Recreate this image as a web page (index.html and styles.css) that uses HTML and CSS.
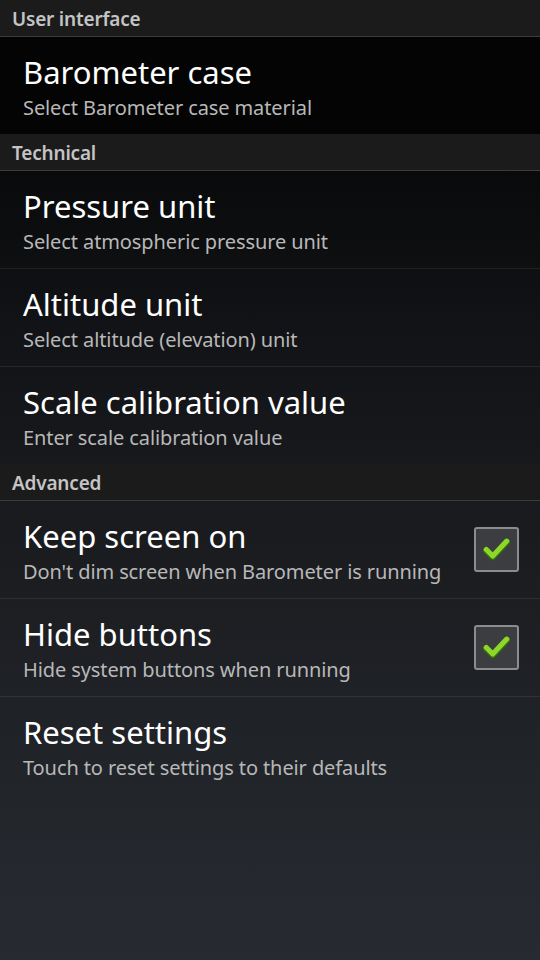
FILE: index.html
```html
<!DOCTYPE html>
<html>
<head>
<meta charset="utf-8">
<link rel="stylesheet" href="styles.css">
</head>
<body>
<div class="screen">
  <div class="section">User interface</div>
  <div class="row first last">
    <div class="texts">
      <div class="title">Barometer case</div>
      <div class="summary">Select Barometer case material</div>
    </div>
  </div>
  <div class="section">Technical</div>
  <div class="row">
    <div class="texts">
      <div class="title">Pressure unit</div>
      <div class="summary">Select atmospheric pressure unit</div>
    </div>
  </div>
  <div class="row">
    <div class="texts">
      <div class="title">Altitude unit</div>
      <div class="summary">Select altitude (elevation) unit</div>
    </div>
  </div>
  <div class="row last">
    <div class="texts">
      <div class="title">Scale calibration value</div>
      <div class="summary">Enter scale calibration value</div>
    </div>
  </div>
  <div class="section">Advanced</div>
  <div class="row">
    <div class="texts">
      <div class="title">Keep screen on</div>
      <div class="summary">Don't dim screen when Barometer is running</div>
    </div>
    <div class="check">
      <svg viewBox="0 0 44 44" width="44" height="44"><path d="M11 23 L18 30 L33 14" fill="none" stroke="#2f6f0c" stroke-width="7" stroke-linecap="round" stroke-linejoin="round"/><path d="M11 22 L18 29 L33 13" fill="none" stroke="#8fd62a" stroke-width="5.5" stroke-linecap="round" stroke-linejoin="round"/></svg>
    </div>
  </div>
  <div class="row">
    <div class="texts">
      <div class="title">Hide buttons</div>
      <div class="summary">Hide system buttons when running</div>
    </div>
    <div class="check">
      <svg viewBox="0 0 44 44" width="44" height="44"><path d="M11 23 L18 30 L33 14" fill="none" stroke="#2f6f0c" stroke-width="7" stroke-linecap="round" stroke-linejoin="round"/><path d="M11 22 L18 29 L33 13" fill="none" stroke="#8fd62a" stroke-width="5.5" stroke-linecap="round" stroke-linejoin="round"/></svg>
    </div>
  </div>
  <div class="row last">
    <div class="texts">
      <div class="title">Reset settings</div>
      <div class="summary">Touch to reset settings to their defaults</div>
    </div>
  </div>
</div>
</body>
</html>
```
FILE: styles.css
```css
html, body {
  margin: 0;
  padding: 0;
}
body {
  width: 540px;
  height: 960px;
  overflow: hidden;
  font-family: "Noto Sans", "Open Sans", sans-serif;
  background: linear-gradient(to bottom, #000000 0px, #121316 330px, #1c1e22 600px, #272b31 960px);
}
.screen {
  display: flex;
  flex-direction: column;
}
.section {
  height: 37px;
  flex: none;
  box-sizing: border-box;
  padding: 7px 12px 0;
  font-size: 19px;
  line-height: 24px;
  font-weight: 600;
  color: #c4c4c4;
  background: #1b1b1b;
  border-bottom: 1px solid #3c3c3c;
  letter-spacing: -0.2px;
}
.row {
  height: 98px;
  flex: none;
  box-sizing: border-box;
  display: flex;
  align-items: center;
  padding: 0 21px 0 23px;
  border-bottom: 1px solid rgba(255,255,255,0.08);
}
.row.first {
  background: #040404;
}
.row.last {
  height: 97px;
  border-bottom: none;
}
.texts {
  flex: 1;
  align-self: flex-start;
  padding-top: 16px;
  display: flex;
  flex-direction: column;
}
.title {
  font-size: 31px;
  line-height: 38px;
  color: #ffffff;
}
.summary {
  margin-top: 2px;
  font-size: 20px;
  line-height: 30px;
  color: #b8b8b8;
  letter-spacing: -0.1px;
}
.check {
  width: 45px;
  height: 45px;
  flex: none;
  box-sizing: border-box;
  border: 2px solid #8a8c90;
  border-radius: 3px;
  background: #3b3d41;
  display: flex;
  align-items: center;
  justify-content: center;
}
.check svg {
  width: 41px;
  height: 41px;
}
```
